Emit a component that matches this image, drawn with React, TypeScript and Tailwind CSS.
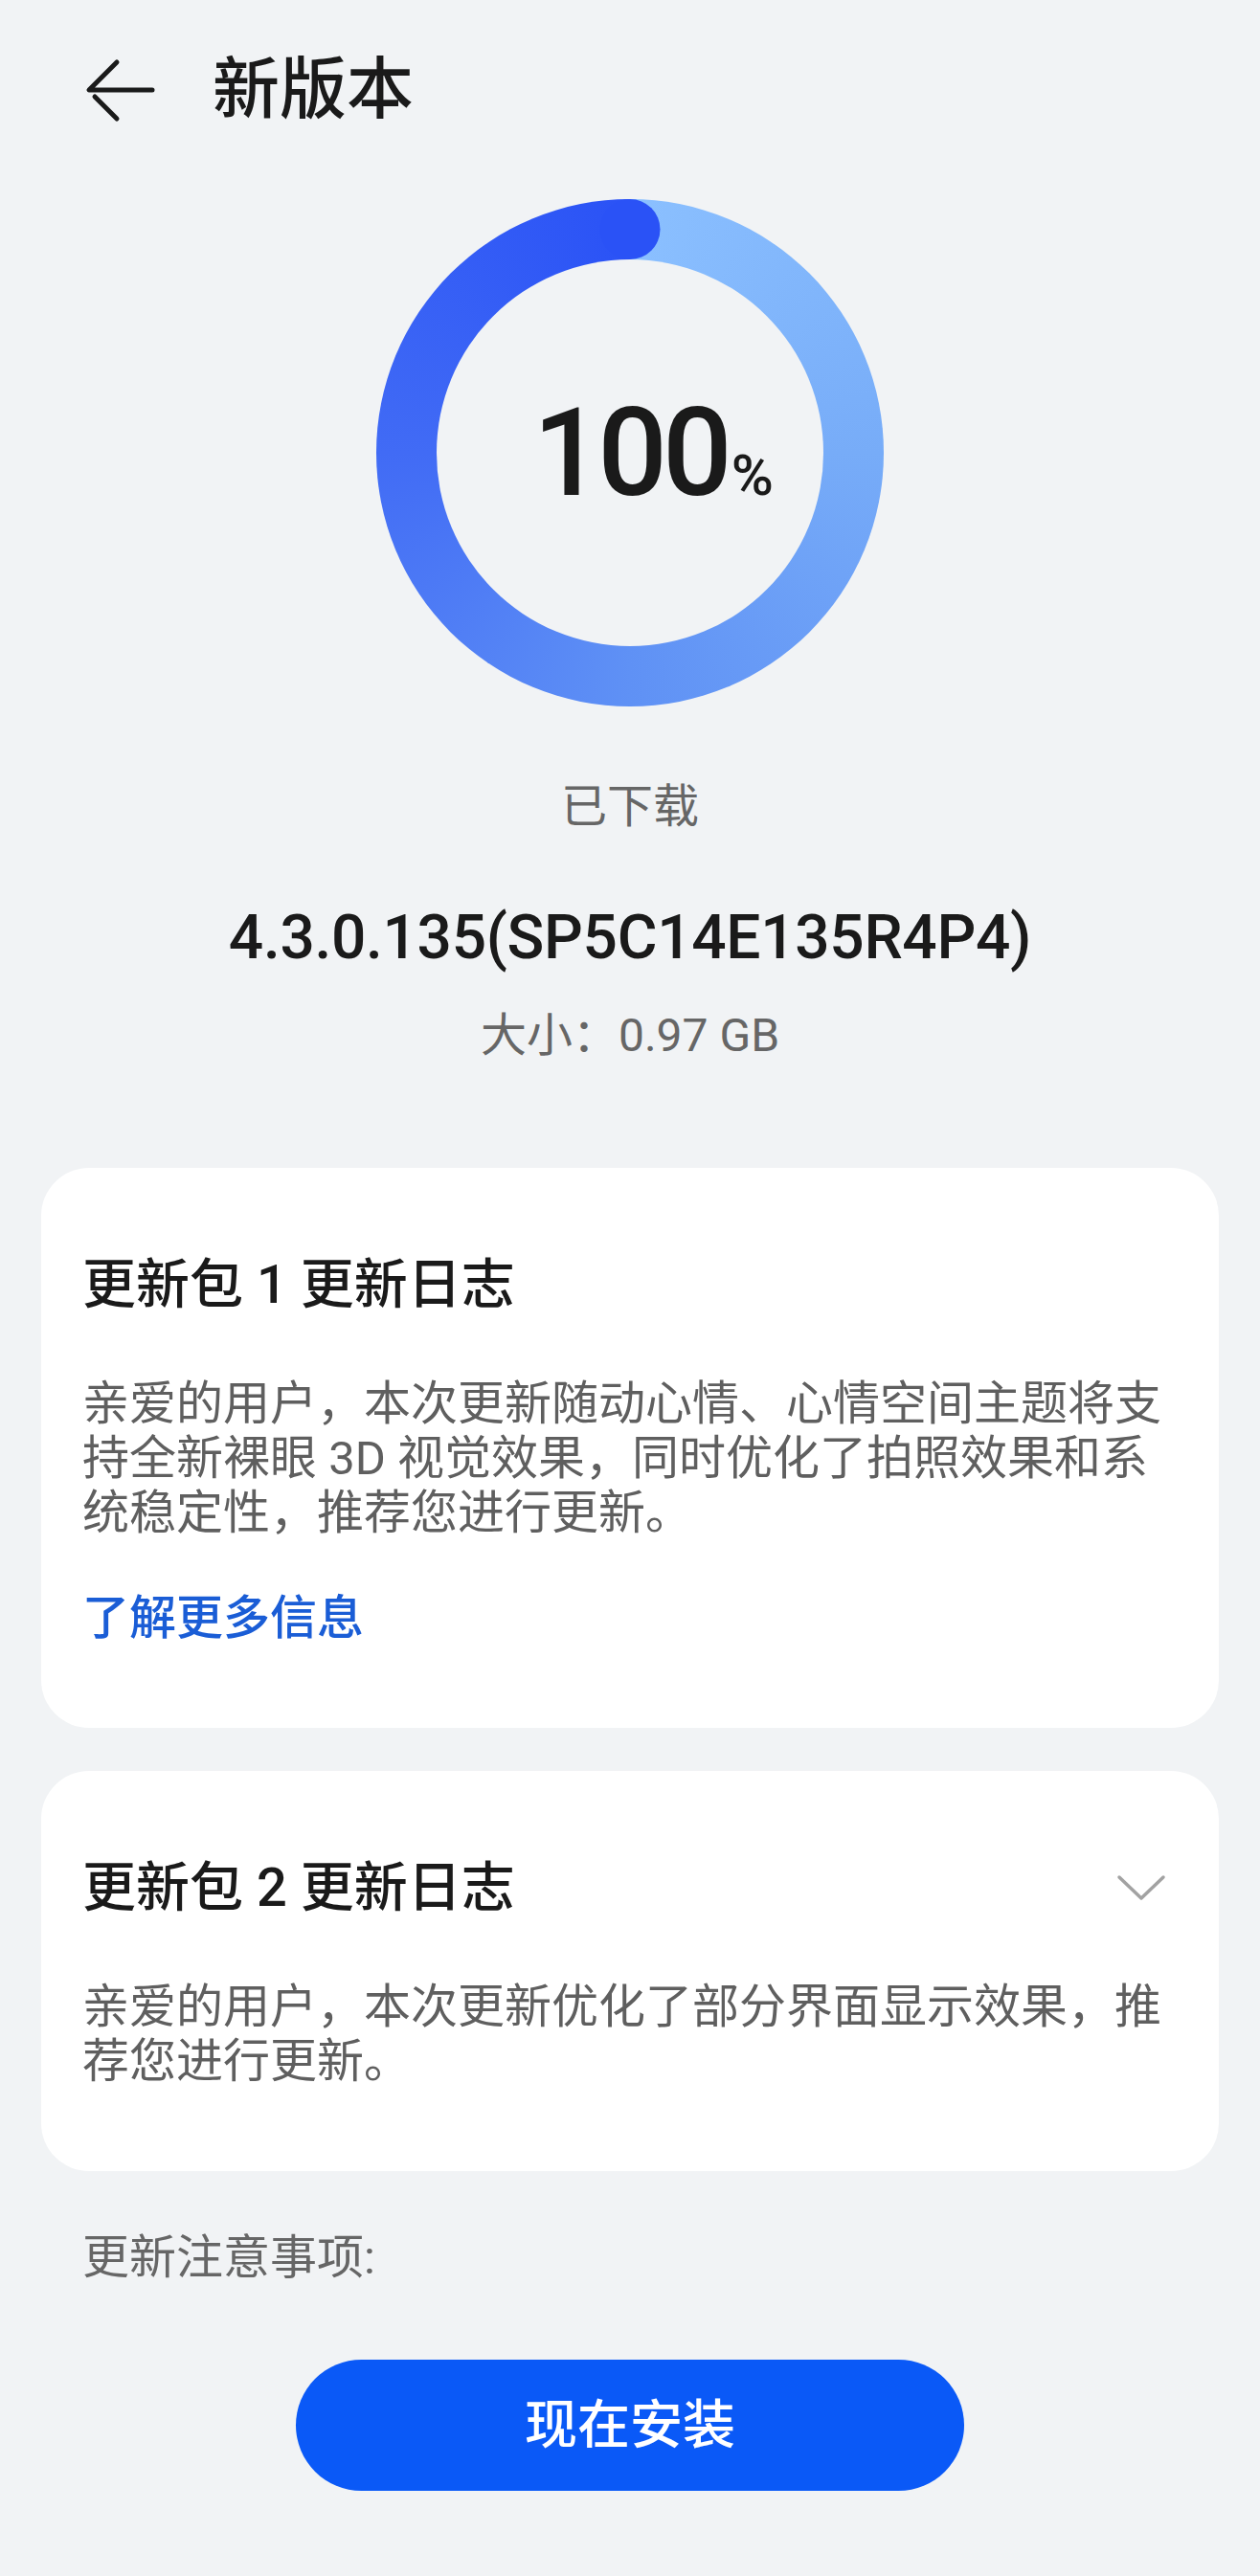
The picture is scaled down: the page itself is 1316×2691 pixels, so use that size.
import React from "react";

const BackIcon = () => (
	<svg viewBox="0 0 76 70" className="h-[70px] w-[76px]" fill="none">
		<path
			d="M34 6 L5 35 L71 35 M11 42 L34 65"
			stroke="#1a1a1a"
			strokeWidth="5"
			strokeLinecap="round"
			strokeLinejoin="round"
		/>
	</svg>
);

const ChevronDown = () => (
	<svg viewBox="0 0 52 30" className="mr-[12px] h-[30px] w-[52px]" fill="none">
		<path
			d="M3 4 L26 26 L49 4"
			stroke="#a2a2a2"
			strokeWidth="3.5"
			strokeLinecap="round"
			strokeLinejoin="round"
		/>
	</svg>
);

interface ChangelogCardProps {
	title: string;
	lines: string[];
	link?: string;
	collapsible?: boolean;
}

const ChangelogCard: React.FC<ChangelogCardProps> = ({
	title,
	lines,
	link,
	collapsible,
}) => {
	return (
		<div className="rounded-[50px] bg-white px-[43px] pb-[86px] pt-[88px]">
			<div className="flex items-center justify-between">
				<div className="text-[56px] font-medium leading-[68px] text-[#1a1a1a]">
					{title}
				</div>
				{collapsible && <ChevronDown />}
			</div>

			<div className="mt-[62px] text-[49px] leading-[57px] text-[#5f5f5f]">
				{lines.map((line) => (
					<div key={line} className="whitespace-nowrap">
						{line}
					</div>
				))}
			</div>

			{link && (
				<div className="mt-[53px] text-[49px] font-medium leading-[57px] text-[#1a5dd6]">
					{link}
				</div>
			)}
		</div>
	);
};

export default function App() {
	return (
		<div className="min-h-[2691px] w-[1316px] bg-[#f1f3f5] font-[Roboto,'Noto_Sans_CJK_SC',sans-serif]">
			{/* header */}
			<div className="flex h-[188px] items-center pl-[88px]">
				<BackIcon />
				<div className="ml-[58px] text-[70px] font-medium leading-none text-[#1a1a1a]">
					新版本
				</div>
			</div>

			{/* progress ring */}
			<div className="relative mx-auto mt-[20px] h-[530px] w-[530px] rounded-full bg-[conic-gradient(#8bc0ff,#77acf8_25%,#5f91f5_50%,#416bf5_75%,#2a52f6)] p-[63px]">
				<div className="flex h-full w-full items-center justify-center rounded-full bg-[#f1f3f5]">
					<span className="relative text-[128px] font-medium leading-none tracking-[-5px] text-[#1a1a1a]">
						100
						<span className="absolute bottom-[10px] left-full ml-[4px] text-[60px] leading-none tracking-normal">
							%
						</span>
					</span>
				</div>
				<div className="absolute left-1/2 top-0 h-[63px] w-[63px] -translate-x-1/2 rounded-full bg-[#2a52f6]" />
			</div>

			<div className="mt-[77px] text-center text-[48px] leading-[56px] text-[#666666]">
				已下载
			</div>
			<div className="mt-[73px] text-center text-[64px] font-medium leading-[72px] tracking-[-0.3px] text-[#1a1a1a]">
				4.3.0.135(SP5C14E135R4P4)
			</div>
			<div className="mt-[38px] text-center text-[48px] leading-[56px] text-[#666666]">
				大小：0.97 GB
			</div>

			{/* changelogs */}
			<div className="mt-[110px] flex flex-col gap-[45px] px-[43px]">
				<ChangelogCard
					title="更新包 1 更新日志"
					lines={[
						"亲爱的用户，本次更新随动心情、心情空间主题将支",
						"持全新裸眼 3D 视觉效果，同时优化了拍照效果和系",
						"统稳定性，推荐您进行更新。",
					]}
					link="了解更多信息"
				/>
				<ChangelogCard
					title="更新包 2 更新日志"
					lines={[
						"亲爱的用户，本次更新优化了部分界面显示效果，推",
						"荐您进行更新。",
					]}
					collapsible
				/>
			</div>

			<div className="mt-[63px] pl-[86px] text-[49px] leading-[56px] text-[#666666]">
				更新注意事项:
			</div>

			<div className="mt-[78px] flex justify-center">
				<button className="flex h-[137px] w-[698px] items-center justify-center rounded-full bg-[#0a59f7] text-[55px] font-medium text-white">
					现在安装
				</button>
			</div>
		</div>
	);
}
